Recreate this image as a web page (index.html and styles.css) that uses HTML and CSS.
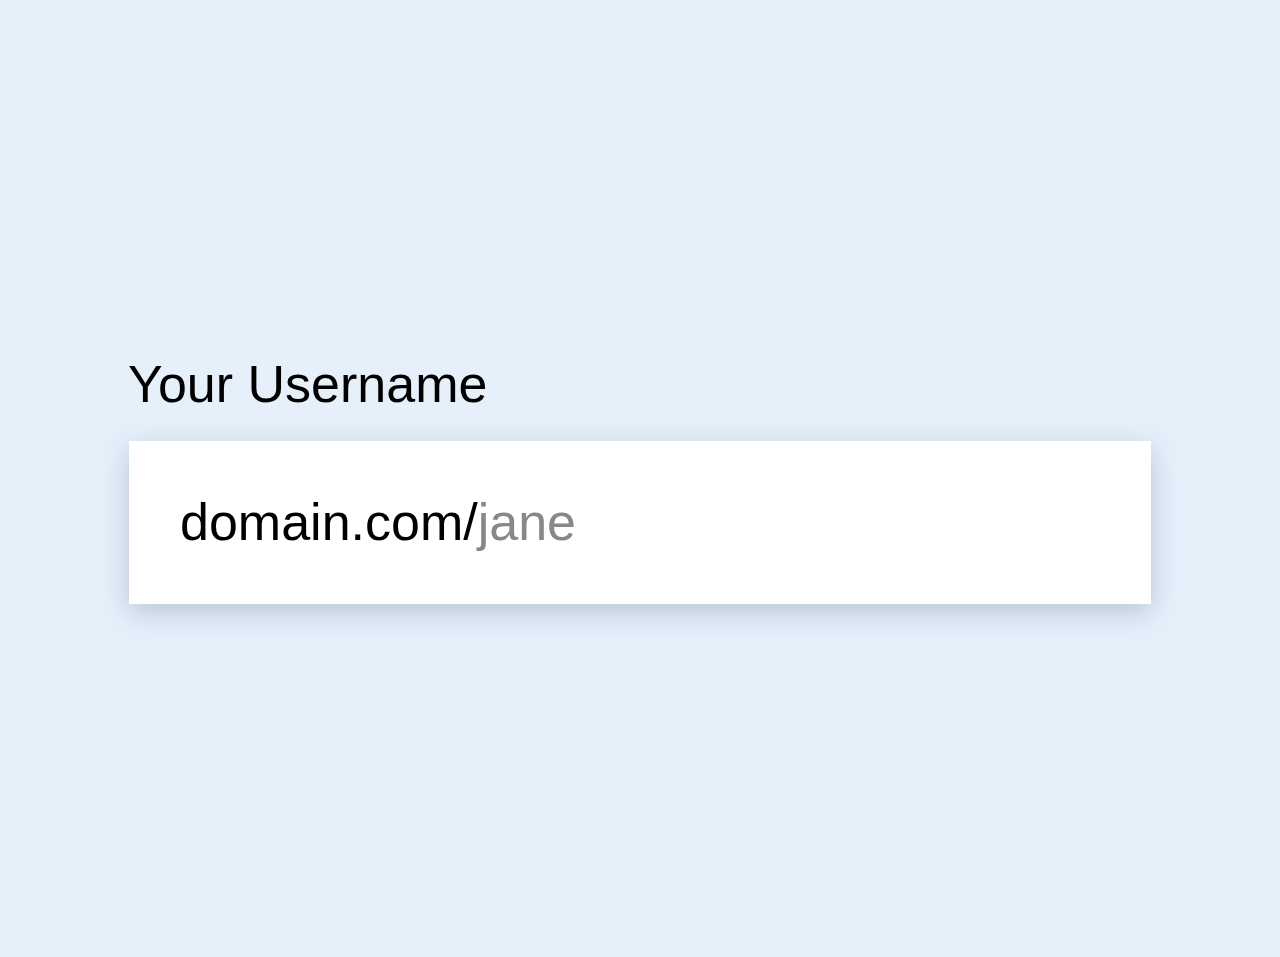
FILE: index.html
```html
<!DOCTYPE html>
<html lang="en">
<head>
<meta charset="utf-8">
<title>Your Username</title>
<link rel="stylesheet" href="styles.css">
</head>
<body>
<main class="page">
  <div class="field">
    <label class="label" for="username">Your Username</label>
    <div class="input-box" id="username">
      <span class="prefix">domain.com/</span><span class="placeholder">jane</span>
    </div>
  </div>
</main>
</body>
</html>
```

FILE: styles.css
```css
html, body {
  margin: 0;
  padding: 0;
  height: 100%;
}
body {
  background: #e6f0fb;
  font-family: "Liberation Sans", Arial, sans-serif;
  color: #000;
}
.page {
  height: 100%;
  display: flex;
  align-items: center;
  justify-content: center;
}
.field {
  width: 80%;
  display: flex;
  flex-direction: column;
  gap: 27px;
}
.label {
  font-size: 52px;
  line-height: normal;
}
.input-box {
  margin: 0 1px;
  background: #fff;
  padding: 51px 51px 52px;
  font-size: 52px;
  line-height: normal;
  box-shadow: 0 8px 26px rgba(50, 70, 110, 0.25);
}
.placeholder {
  color: #888;
}
```
